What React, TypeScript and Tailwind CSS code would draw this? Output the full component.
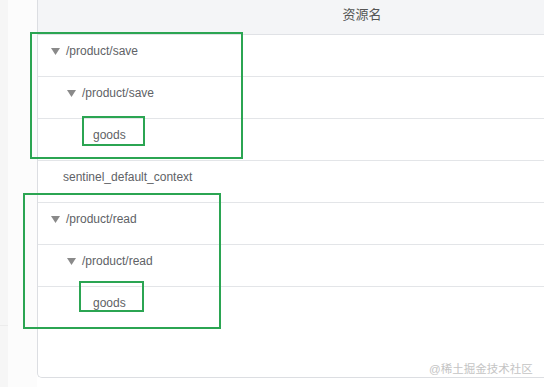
import React from "react";

const Tri = () => (
  <svg width="9" height="7" viewBox="0 0 9 7" className="shrink-0">
    <path d="M0 0 L9 0 L4.5 7 Z" fill="#8a8a8a" />
  </svg>
);

type Row = { text: string; arrow: boolean; pl: number };

const rows: Row[] = [
  { text: "/product/save", arrow: true, pl: 13 },
  { text: "/product/save", arrow: true, pl: 29 },
  { text: "goods", arrow: false, pl: 55 },
  { text: "sentinel_default_context", arrow: false, pl: 25 },
  { text: "/product/read", arrow: true, pl: 13 },
  { text: "/product/read", arrow: true, pl: 29 },
  { text: "goods", arrow: false, pl: 55 },
];

export default function App() {
  return (
    <div
      className="relative w-[544px] h-[387px] overflow-hidden bg-white flex"
      style={{ fontFamily: '"Liberation Sans", Arial, "Noto Sans CJK SC", sans-serif' }}
    >
      <div className="w-[37px] shrink-0 flex bg-[#fcfcfc]">
        <div className="w-[8px] h-full bg-[#f6f6f6] flex flex-col">
          <div className="h-[325px]" />
          <div className="h-px bg-[#ececec]" />
        </div>
      </div>
      <div className="flex-1 flex flex-col">
        <div className="h-[378px] border-l border-b border-[#dcdee2] rounded-bl-[5px] overflow-hidden">
          <div className="w-[648px]">
            <div className="h-[35px] bg-[#f4f5f7] border-b border-[#e0e2e6] flex items-start justify-center pt-[6px]">
              <span className="text-[13px] leading-[18px] text-[#555]">资源名</span>
            </div>
            {rows.map((r, i) => (
              <div
                key={i}
                className={
                  i < rows.length - 1
                    ? "h-[42px] border-b border-[#e3e5e8] flex items-start pt-[6px]"
                    : "h-[42px] flex items-start pt-[6px]"
                }
                style={{ paddingLeft: r.pl }}
              >
                <div className="flex items-center gap-[6px] h-[20px]">
                  {r.arrow && <Tri />}
                  <span className="text-[12px] leading-[20px] text-[#606266]">{r.text}</span>
                </div>
              </div>
            ))}
          </div>
        </div>
      </div>

      <div className="absolute left-[30px] top-[32px] w-[213px] h-[127px] border-2 border-[#2ba552]" />
      <div className="absolute left-[82px] top-[116px] w-[63px] h-[30px] border-2 border-[#2ba552]" />
      <div className="absolute left-[23px] top-[193px] w-[198px] h-[136px] border-2 border-[#2ba552]" />
      <div className="absolute left-[79px] top-[281px] w-[65px] h-[31px] border-2 border-[#2ba552]" />

      <div className="absolute left-[429px] top-[361px] whitespace-nowrap text-[11.5px] leading-[16px] text-[#c4c4c4]">
        @稀土掘金技术社区
      </div>
    </div>
  );
}
